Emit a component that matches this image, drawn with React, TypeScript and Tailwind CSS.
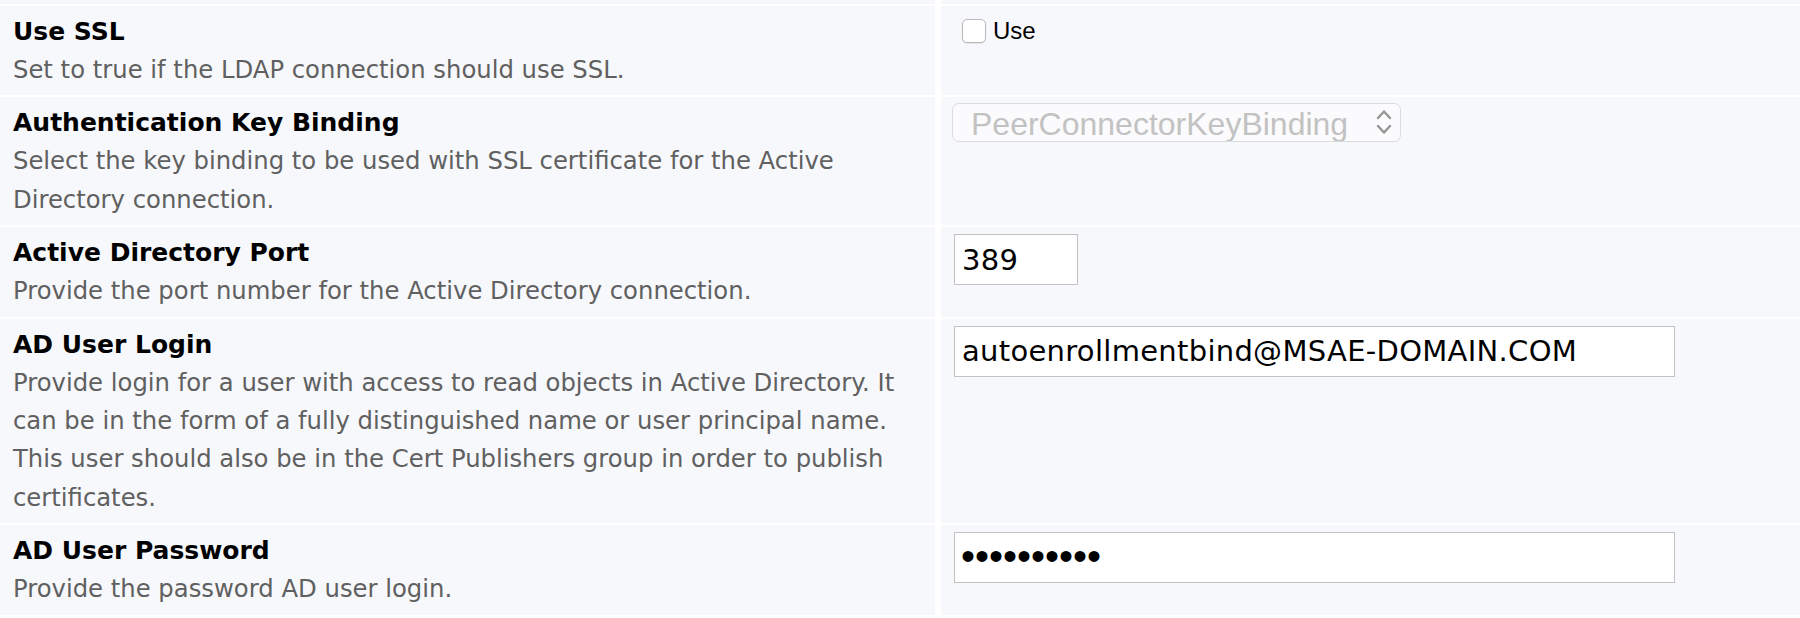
import { useState } from 'react';

type Row = {
  id: string;
  title: string;
  description: string;
  control: React.ReactNode;
};

const labelFont = { fontFamily: '"DejaVu Sans", Verdana, sans-serif' };
const macFont = { fontFamily: '"Liberation Sans", Arial, sans-serif' };

function Chevrons() {
  return (
    <svg width="18" height="28" viewBox="0 0 18 28" fill="none" stroke="#959595" strokeWidth="2.4" strokeLinecap="round" strokeLinejoin="round">
      <path d="M3 10 L9 3.5 L15 10" />
      <path d="M3 18 L9 24.5 L15 18" />
    </svg>
  );
}

function TextField({ value, width }: { value: string; width: string }) {
  return (
    <input
      type="text"
      readOnly
      defaultValue={value}
      style={labelFont}
      className={`${width} h-[51px] border border-[#c2c2c2] bg-white pl-[7px] text-[29px] tracking-[0.3px] text-black outline-none`}
    />
  );
}

function PasswordField({ value, width }: { value: string; width: string }) {
  return (
    <input
      type="password"
      readOnly
      defaultValue={value}
      style={macFont}
      className={`${width} h-[51px] border border-[#c2c2c2] bg-white pb-[4px] pl-[6px] text-[40px] text-black outline-none`}
    />
  );
}

export default function App() {
  const [useSsl, setUseSsl] = useState(false);

  const rows: Row[] = [
    {
      id: 'ssl',
      title: 'Use SSL',
      description: 'Set to true if the LDAP connection should use SSL.',
      control: (
        <label className="ml-[8px] flex items-center gap-[7px]" style={macFont}>
          <input
            type="checkbox"
            checked={useSsl}
            onChange={(e) => setUseSsl(e.target.checked)}
            className="h-6 w-6 appearance-none rounded-[5px] border border-[#b8b8b8] bg-white shadow-[0_1px_1px_rgba(0,0,0,0.08)]"
          />
          <span className="text-[24px] text-black">Use</span>
        </label>
      ),
    },
    {
      id: 'binding',
      title: 'Authentication Key Binding',
      description: 'Select the key binding to be used with SSL certificate for the Active Directory connection.',
      control: (
        <div
          role="combobox"
          aria-disabled="true"
          style={macFont}
          className="-ml-[2px] -mt-[1px] flex h-[39px] w-[449px] items-start justify-between overflow-hidden rounded-[7px] border border-[#dcdcdc] bg-[#fbfbfd] pl-[18px] pr-[7px]"
        >
          <span className="pt-[2px] text-[32px] leading-[36px] text-[#c2c2c2]">PeerConnectorKeyBinding</span>
          <span className="pt-[4px]">
            <Chevrons />
          </span>
        </div>
      ),
    },
    {
      id: 'port',
      title: 'Active Directory Port',
      description: 'Provide the port number for the Active Directory connection.',
      control: <TextField value="389" width="w-[124px]" />,
    },
    {
      id: 'login',
      title: 'AD User Login',
      description:
        'Provide login for a user with access to read objects in Active Directory. It can be in the form of a fully distinguished name or user principal name. This user should also be in the Cert Publishers group in order to publish certificates.',
      control: <TextField value="autoenrollmentbind@MSAE-DOMAIN.COM" width="w-[721px]" />,
    },
    {
      id: 'password',
      title: 'AD User Password',
      description: 'Provide the password AD user login.',
      control: <PasswordField value="password12" width="w-[721px]" />,
    },
  ];

  return (
    <div className="min-h-screen w-[1800px] bg-white" style={labelFont}>
      <div className="grid grid-cols-[935px_1fr] gap-x-[6px] gap-y-[2px]">
        {/* tail of the row above */}
        <div className="h-[4px] bg-[#f7f8fc]" />
        <div className="h-[4px] bg-[#f7f8fc]" />

        {rows.map((row) => (
          <div key={row.id} className="contents">
            <div className="bg-[#f7f8fc] pb-[6px] pl-[13px] pr-[15px] pt-[7px]">
              <h3 className="text-[25px] font-bold leading-[38px] text-black">{row.title}</h3>
              <p className="text-[24.3px] leading-[38.4px] text-[#606060]">{row.description}</p>
            </div>
            <div className="flex items-start bg-[#f7f8fc] pl-[13px] pt-[7px]">{row.control}</div>
          </div>
        ))}
      </div>
    </div>
  );
}
